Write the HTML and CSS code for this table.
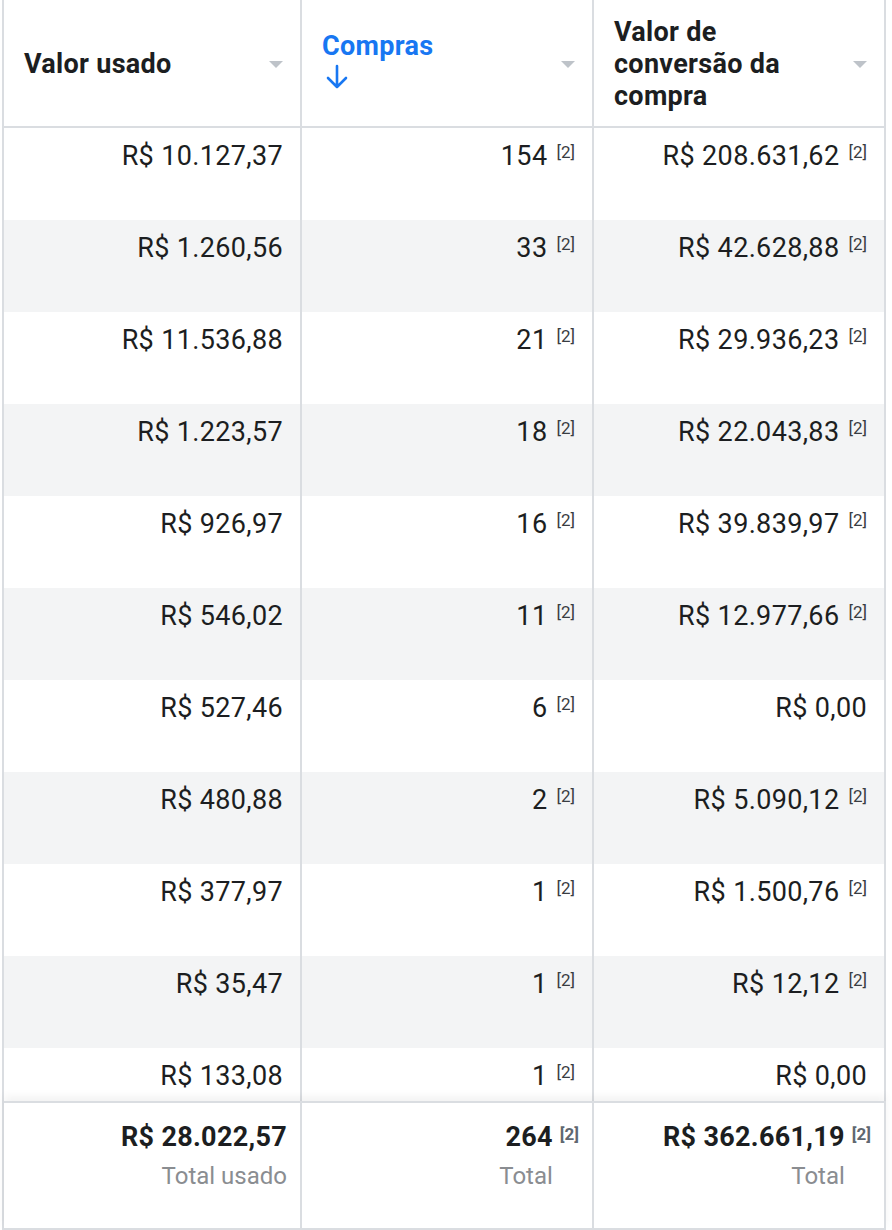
FILE: index.html
```html
<!DOCTYPE html>
<html lang="pt-BR">
<head>
<meta charset="utf-8">
<title>Tabela</title>
<link rel="stylesheet" href="styles.css">
</head>
<body>
<div class="table">
  <div class="head">
    <div class="hcell">
      <div class="htitle">Valor usado</div>
      <span class="caret"></span>
    </div>
    <div class="hcell">
      <div class="htitle sorted">Compras
        <svg class="arrow" width="24" height="26" viewBox="0 0 24 26"><path d="M12 2 V23 M3 14 L12 23 L21 14" fill="none" stroke="#1877f2" stroke-width="2.6" stroke-linecap="round" stroke-linejoin="round"/></svg>
      </div>
      <span class="caret"></span>
    </div>
    <div class="hcell">
      <div class="htitle">Valor de conversão da compra</div>
      <span class="caret"></span>
    </div>
  </div>
  <div class="body">
    <div class="row"><div class="cell">R$ 10.127,37</div><div class="cell">154<span class="ref">[2]</span></div><div class="cell">R$ 208.631,62<span class="ref">[2]</span></div></div>
    <div class="row alt"><div class="cell">R$ 1.260,56</div><div class="cell">33<span class="ref">[2]</span></div><div class="cell">R$ 42.628,88<span class="ref">[2]</span></div></div>
    <div class="row"><div class="cell">R$ 11.536,88</div><div class="cell">21<span class="ref">[2]</span></div><div class="cell">R$ 29.936,23<span class="ref">[2]</span></div></div>
    <div class="row alt"><div class="cell">R$ 1.223,57</div><div class="cell">18<span class="ref">[2]</span></div><div class="cell">R$ 22.043,83<span class="ref">[2]</span></div></div>
    <div class="row"><div class="cell">R$ 926,97</div><div class="cell">16<span class="ref">[2]</span></div><div class="cell">R$ 39.839,97<span class="ref">[2]</span></div></div>
    <div class="row alt"><div class="cell">R$ 546,02</div><div class="cell">11<span class="ref">[2]</span></div><div class="cell">R$ 12.977,66<span class="ref">[2]</span></div></div>
    <div class="row"><div class="cell">R$ 527,46</div><div class="cell">6<span class="ref">[2]</span></div><div class="cell">R$ 0,00</div></div>
    <div class="row alt"><div class="cell">R$ 480,88</div><div class="cell">2<span class="ref">[2]</span></div><div class="cell">R$ 5.090,12<span class="ref">[2]</span></div></div>
    <div class="row"><div class="cell">R$ 377,97</div><div class="cell">1<span class="ref">[2]</span></div><div class="cell">R$ 1.500,76<span class="ref">[2]</span></div></div>
    <div class="row alt"><div class="cell">R$ 35,47</div><div class="cell">1<span class="ref">[2]</span></div><div class="cell">R$ 12,12<span class="ref">[2]</span></div></div>
    <div class="row"><div class="cell">R$ 133,08</div><div class="cell">1<span class="ref">[2]</span></div><div class="cell">R$ 0,00</div></div>
  </div>
  <div class="foot">
    <div class="fcell">
      <div class="fstack"><div class="fval">R$ 28.022,57</div><div class="flabel">Total usado</div></div>
    </div>
    <div class="fcell">
      <div class="fstack"><div class="fval">264</div><div class="flabel">Total</div></div><span class="fref">[2]</span>
    </div>
    <div class="fcell">
      <div class="fstack"><div class="fval">R$ 362.661,19</div><div class="flabel">Total</div></div><span class="fref">[2]</span>
    </div>
  </div>
</div>
</body>
</html>
```
FILE: styles.css
```css
html, body {
  margin: 0;
  padding: 0;
  background: #fff;
}
body {
  font-family: Roboto, "Liberation Sans", Arial, sans-serif;
  color: #1c1e21;
}
.table {
  width: 882px;
  margin-left: 2px;
  border-left: 2px solid #dadde1;
}
.head, .row, .foot {
  display: grid;
  grid-template-columns: 298px 292px 292px;
}
.head {
  height: 126px;
  border-bottom: 2px solid #dadde1;
}
.hcell {
  border-right: 2px solid #dadde1;
  display: flex;
  align-items: center;
  justify-content: space-between;
  padding: 0 17px 0 20px;
}
.htitle {
  font-weight: 700;
  font-size: 27px;
  letter-spacing: 0.3px;
  line-height: 32px;
  max-width: 210px;
  margin-top: 2px;
}
.htitle.sorted {
  color: #1877f2;
  display: flex;
  flex-direction: column;
  align-items: flex-start;
  gap: 2px;
  margin-top: -6px;
}
.arrow {
  display: block;
  margin-left: 3px;
}
.caret {
  width: 0;
  height: 0;
  border-left: 7px solid transparent;
  border-right: 7px solid transparent;
  border-top: 7px solid #bec3c9;
  margin-top: 2px;
}
.body {
  height: 973px;
  overflow: hidden;
}
.row {
  height: 92px;
}
.row.alt {
  background: #f3f4f5;
}
.cell {
  border-right: 2px solid #dadde1;
  display: flex;
  justify-content: flex-end;
  align-items: flex-start;
  padding: 13px 17px 0 0;
  font-size: 27px;
  letter-spacing: 0.35px;
  line-height: 30px;
}
.ref {
  font-size: 17px;
  letter-spacing: 0;
  line-height: 17px;
  color: #3a3d42;
  margin-left: 9px;
  margin-top: 3px;
}
.foot {
  height: 125px;
  border-top: 2px solid #dadde1;
  border-bottom: 2px solid #dadde1;
  box-shadow: 0 -5px 8px rgba(0, 0, 0, 0.05);
  position: relative;
  background: #fff;
}
.fcell {
  border-right: 2px solid #dadde1;
  display: flex;
  justify-content: flex-end;
  align-items: flex-start;
  padding: 19px 13px 0 0;
}
.fstack {
  display: flex;
  flex-direction: column;
  align-items: flex-end;
}
.fval {
  font-size: 27px;
  letter-spacing: 0.3px;
  line-height: 30px;
  font-weight: 700;
}
.flabel {
  font-size: 24px;
  line-height: 30px;
  color: #8a8d91;
  margin-top: 9px;
}
.fref {
  font-size: 17px;
  line-height: 17px;
  font-weight: 700;
  color: #606770;
  margin-left: 7px;
  margin-top: 4px;
}
```
